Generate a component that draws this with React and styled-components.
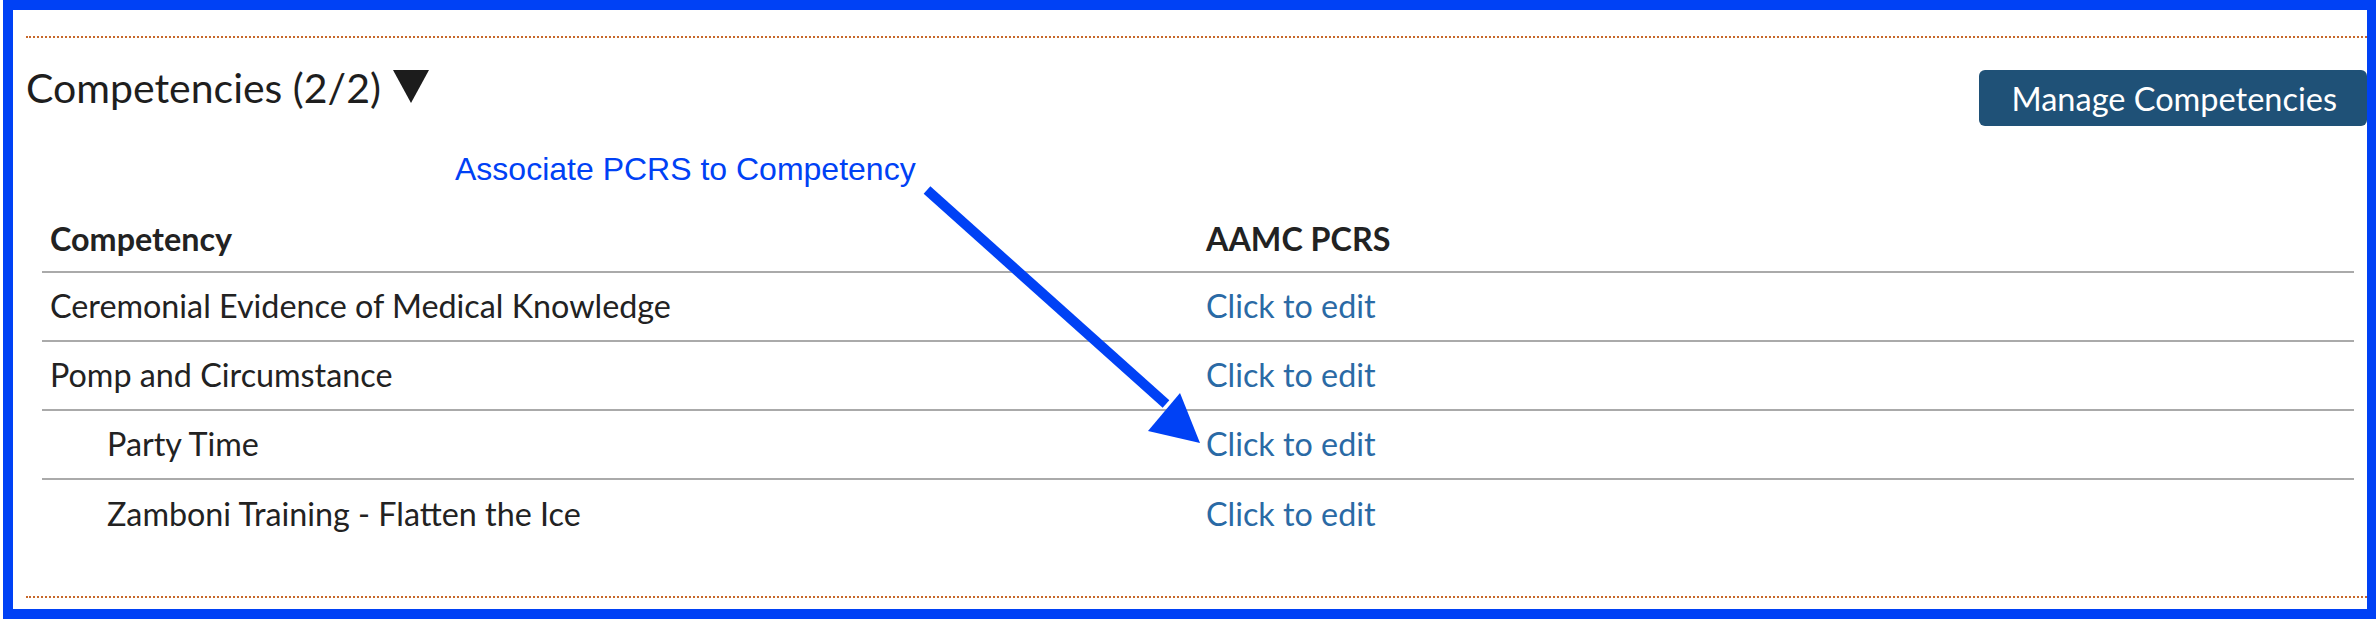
import React from "react";
import styled, { createGlobalStyle } from "styled-components";

const GlobalStyle = createGlobalStyle`
  html, body {
    margin: 0;
    padding: 0;
    background: #ffffff;
  }
  body {
    font-family: Lato, "Open Sans", sans-serif;
    color: #222222;
  }
`;

const Frame = styled.div`
  box-sizing: border-box;
  width: 2373px;
  height: 619px;
  margin-left: 3px;
  border: 10px solid #0041f5;
  border-right-width: 9px;
`;

const Panel = styled.div`
  position: relative;
  box-sizing: border-box;
  height: 100%;
  display: flex;
  flex-direction: column;
  padding: 26px 0 11px 13px;
`;

const Divider = styled.div`
  border-top: 2px dotted #c8682a;
  margin-top: ${({ bottom }) => (bottom ? "auto" : "0")};
`;

const HeaderRow = styled.div`
  display: flex;
  justify-content: space-between;
  align-items: flex-start;
  margin-top: 26px;
`;

const Title = styled.h2`
  margin: 0;
  display: flex;
  align-items: center;
  gap: 12px;
  font-size: 41px;
  line-height: 48px;
  font-weight: 400;
  color: #1e1e1e;
`;

const Caret = styled.svg`
  width: 36px;
  height: 33px;
  margin-top: -4px;
`;

const ManageButton = styled.button`
  margin-top: 6px;
  height: 56px;
  padding: 0 30px 0 33px;
  border: none;
  border-radius: 6px;
  background: #1f5177;
  color: #ffffff;
  font-family: Lato, "Open Sans", sans-serif;
  font-size: 32.5px;
  cursor: pointer;
`;

const Table = styled.div`
  margin: 79px 13px 0 16px;
  display: flex;
  flex-direction: column;
`;

const Row = styled.div`
  display: grid;
  grid-template-columns: 1fr 1fr;
  box-sizing: border-box;
  height: ${({ head }) => (head ? "68px" : "69px")};
  padding-bottom: ${({ head }) => (head ? "0" : "3px")};
  align-items: center;
  border-bottom: ${({ last }) => (last ? "none" : "2px solid #aaaaaa")};
`;

const Cell = styled.div`
  padding: 0 8px 0 ${({ indent }) => (indent ? "65px" : "8px")};
  font-size: 32.3px;
  font-weight: ${({ head }) => (head ? 700 : 400)};
  color: #222222;
  white-space: nowrap;
`;

const EditLink = styled.a`
  color: #2a6aa5;
  text-decoration: none;
  cursor: pointer;
`;

const Callout = styled.div`
  position: absolute;
  left: 442px;
  top: 141px;
  font-family: "Liberation Sans", Arial, sans-serif;
  font-size: 32px;
  color: #0041f5;
  white-space: nowrap;
`;

const Arrow = styled.svg`
  position: absolute;
  left: 887px;
  top: 170px;
  width: 320px;
  height: 270px;
  overflow: visible;
`;

const rows = [
  { name: "Ceremonial Evidence of Medical Knowledge" },
  { name: "Pomp and Circumstance" },
  { name: "Party Time", indent: true },
  { name: "Zamboni Training - Flatten the Ice", indent: true },
];

const App = () => {
  return (
    <>
      <GlobalStyle />
      <Frame>
        <Panel>
          <Divider />
          <HeaderRow>
            <Title>
              Competencies (2/2)
              <Caret viewBox="0 0 36 33">
                <polygon points="0,0 36,0 18,33" fill="#1c1c1c" />
              </Caret>
            </Title>
            <ManageButton>Manage Competencies</ManageButton>
          </HeaderRow>
          <Table>
            <Row head>
              <Cell head>Competency</Cell>
              <Cell head>AAMC PCRS</Cell>
            </Row>
            {rows.map((r, i) => (
              <Row key={r.name} last={i === rows.length - 1}>
                <Cell indent={r.indent}>{r.name}</Cell>
                <Cell>
                  <EditLink>Click to edit</EditLink>
                </Cell>
              </Row>
            ))}
          </Table>
          <Divider bottom />
          <Callout>Associate PCRS to Competency</Callout>
          <Arrow viewBox="0 0 320 270">
            <line x1="27" y1="10" x2="266" y2="224" stroke="#0041f5" strokeWidth="10" />
            <polygon points="300,263 280,213 248,251" fill="#0041f5" />
          </Arrow>
        </Panel>
      </Frame>
    </>
  );
};

export default App;
